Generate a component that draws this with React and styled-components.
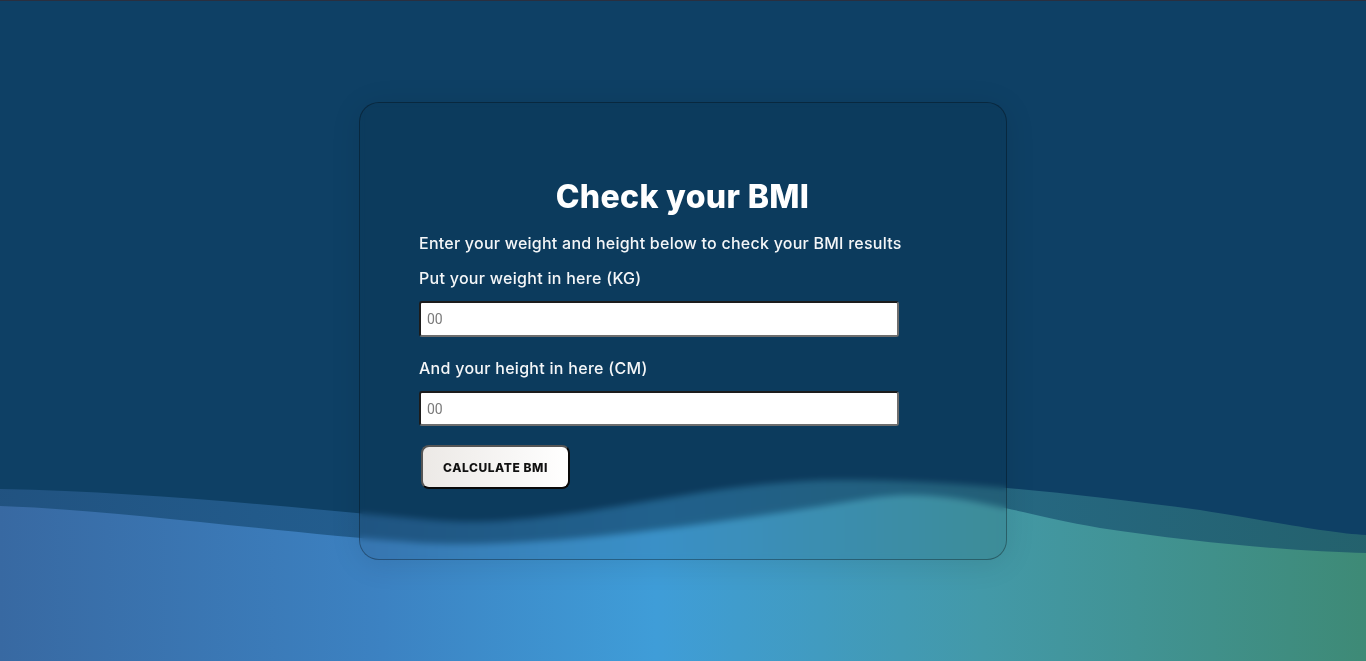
import React from "react";
import styled, { createGlobalStyle } from "styled-components";

const Global = createGlobalStyle`
  * { box-sizing: border-box; }
  html, body { margin: 0; padding: 0; height: 100%; }
  body {
    font-family: Inter, "Noto Sans", sans-serif;
    background: #0e4065;
  }
`;

const Page = styled.main`
  position: relative;
  min-height: 661px;
  height: 100vh;
  overflow: hidden;
  background: #0e4065;
  border-top: 1px solid #2a2f3f;
  display: flex;
  justify-content: center;
  align-items: flex-start;
  padding-top: 101px;
`;

const Waves = styled.svg`
  position: absolute;
  left: 0;
  bottom: 0;
  width: 100%;
  height: 183px;
  z-index: 0;
  display: block;
`;

const Card = styled.section`
  position: relative;
  z-index: 1;
  width: 648px;
  height: 458px;
  border-radius: 20px;
  border: 1px solid rgba(0, 0, 0, 0.32);
  background: rgba(0, 0, 0, 0.08);
  backdrop-filter: blur(3px);
  -webkit-backdrop-filter: blur(3px);
  box-shadow: 0 4px 30px rgba(0, 0, 0, 0.1);
  padding: 70px 60px 70px 59px;
  display: flex;
  flex-direction: column;
  color: #fff;
`;

const Title = styled.h1`
  margin: 0;
  text-align: center;
  font-size: 32px;
  line-height: 48px;
  font-weight: 800;
  letter-spacing: 0.35px;
  color: #fff;
`;

const Subtitle = styled.p`
  margin: 10px 0 0;
  font-size: 16px;
  line-height: 24px;
  font-weight: 500;
  letter-spacing: 0.24px;
  color: #f4f6f8;
`;

const Label = styled.label`
  display: block;
  margin-top: ${(p) => p.$gap}px;
  font-size: 16px;
  line-height: 24px;
  font-weight: 500;
  letter-spacing: 0.28px;
  color: #f4f6f8;
`;

const Input = styled.input`
  display: block;
  margin-top: 11px;
  width: 480px;
  height: 36px;
  padding: 0 6px;
  border-radius: 3px;
  border: 2px solid;
  border-color: #1c1c1c #6e6e6e #6e6e6e #1c1c1c;
  background: #fff;
  font-family: Roboto, "Liberation Sans", sans-serif;
  font-size: 14px;
  color: #222;
  outline: none;
  &::placeholder { color: #7a7a7a; }
`;

const Button = styled.button`
  margin-top: 19px;
  margin-left: 2px;
  align-self: flex-start;
  width: 149px;
  height: 44px;
  border-radius: 8px;
  border: 2px solid #0a0a0a;
  border-top-color: #555;
  border-left-color: #555;
  background: linear-gradient(to right, #ece9e6, #ffffff);
  font-family: Inter, "Noto Sans", sans-serif;
  font-size: 12px;
  font-weight: 800;
  letter-spacing: 0.55px;
  color: #111;
  cursor: pointer;
`;

export default function App() {
  return (
    <>
      <Global />
      <Page>
        <Waves viewBox="0 0 1366 183" preserveAspectRatio="none" aria-hidden="true">
          <defs>
            <linearGradient id="wg" x1="0" y1="0" x2="1" y2="0">
              <stop offset="0" stopColor="#3869a2" />
              <stop offset="0.28" stopColor="#3c82c2" />
              <stop offset="0.48" stopColor="#3f9dd8" />
              <stop offset="0.72" stopColor="#4399a8" />
              <stop offset="1" stopColor="#3e8a76" />
            </linearGradient>
          </defs>
          <path
            d="M0,11 C150,14 300,30 430,42 C560,54 700,0 850,2 C950,3 1050,12 1200,32 C1280,45 1330,55 1366,57 L1366,183 L0,183 Z"
            fill="url(#wg)"
            opacity="0.45"
          />
          <path
            d="M0,28 C120,32 280,55 420,65 C550,72 750,40 877,19 C950,10 1000,32 1100,50 C1200,65 1300,74 1366,75 L1366,183 L0,183 Z"
            fill="url(#wg)"
          />
        </Waves>
        <Card>
          <Title>Check your BMI</Title>
          <Subtitle>Enter your weight and height below to check your BMI results</Subtitle>
          <Label $gap={11} htmlFor="weight">Put your weight in here (KG)</Label>
          <Input id="weight" type="number" placeholder="00" />
          <Label $gap={19} htmlFor="height">And your height in here (CM)</Label>
          <Input id="height" type="number" placeholder="00" />
          <Button type="button">CALCULATE BMI</Button>
        </Card>
      </Page>
    </>
  );
}
